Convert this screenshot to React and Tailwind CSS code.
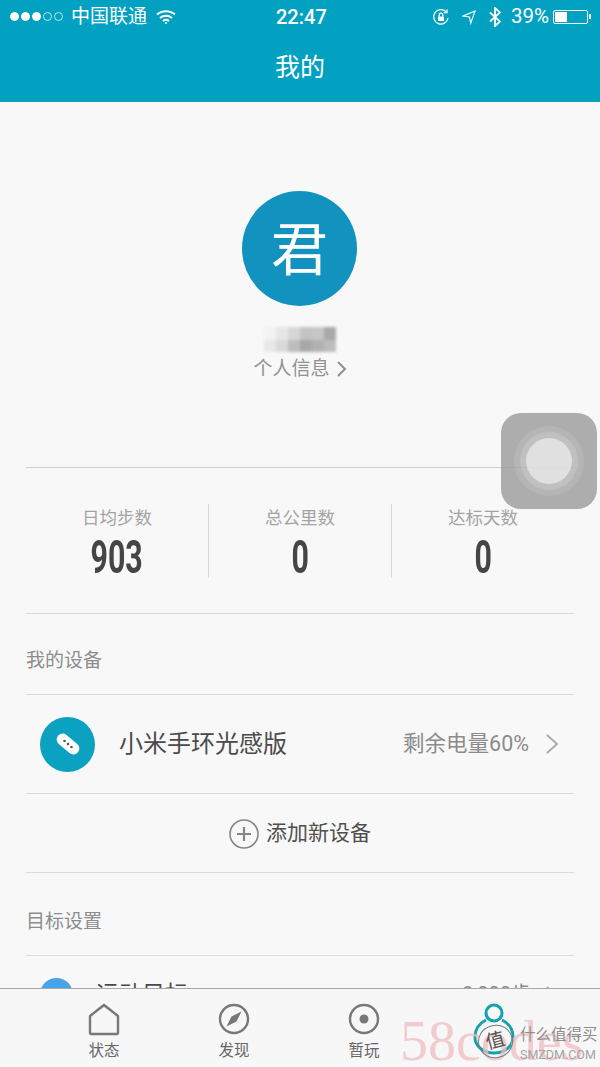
import React from "react";

const CJK = { fontFamily: '"Roboto","Noto Sans CJK SC",sans-serif' };

function Stat({ label, value, border }) {
  return (
    <div className={`flex-1 h-[74px] flex flex-col items-center ${border ? "border-l border-[#d9d9d9]" : ""}`}>
      <div className="text-[17.500px] leading-[26px] text-[#a3a3a3] mt-px">{label}</div>
      <div className="text-[46px] leading-[42px] mt-[5px] font-bold text-[#454545] scale-x-[0.66]">{value}</div>
    </div>
  );
}

function Tab({ label, children }) {
  return (
    <div className="w-[130px] flex flex-col items-center">
      <svg width="36" height="36" viewBox="0 0 36 36" fill="none" stroke="#787878" strokeWidth="2.4">{children}</svg>
      <div className="text-[15.500px] leading-[20px] text-[#666] mt-[3px]">{label}</div>
    </div>
  );
}

const Pixel = ({ c }) => <div className="w-[12px] h-[12.5px]" style={{ background: c }} />;
const pixels = ["#f3f3f3", "#e6e6e6", "#d6d6d6", "#c4c4c4", "#c6c6c6", "#a9a9a9", "#e8e8e8", "#d9d9d9", "#bdbdbd", "#a8a8a8", "#b2b2b2", "#bcbcbc"];

export default function App() {
  return (
    <div className="relative w-[600px] h-[1067px] overflow-hidden flex flex-col bg-[#f8f8f8]" style={CJK}>
      <header className="h-[102px] shrink-0 bg-[#03a1c1] border-b-[3px] border-[#04a3b8] text-white flex flex-col">
        <div className="h-[33px] relative flex items-center pl-[10px] pr-[9px]">
          <div className="flex items-center gap-[2px]">
            {[1, 1, 1, 0, 0].map((f, i) => (
              <span key={i} className={`w-[9px] h-[9px] rounded-full border border-white ${f ? "bg-white" : "opacity-70"}`} />
            ))}
          </div>
          <span className="ml-[8px] text-[19px] leading-none">中国联通</span>
          <svg className="ml-[9px]" width="20" height="16" viewBox="0 0 20 16" fill="none" stroke="white" strokeWidth="2">
            <path d="M1 5.500C6 1 14 1 19 5.500M4 9c3.500-3 8.500-3 12 0M7 12c2-1.500 4-1.500 6 0" />
            <circle cx="10" cy="14" r="1" fill="white" stroke="none" />
          </svg>
          <span className="absolute left-[276px] top-[5px] text-[20px] leading-[24px] font-medium">22:47</span>
          <div className="ml-auto flex items-center">
            <svg width="18" height="18" viewBox="0 0 18 18" fill="none" stroke="white" strokeWidth="1.3">
              <path d="M16 10A7.200 7.200 0 1 1 14 3.800" />
              <path d="M15 1.500v3.200h-3.200" />
              <rect x="6" y="8.500" width="6" height="4.500" fill="white" stroke="none" />
              <path d="M7.200 8.500V7a1.800 1.800 0 0 1 3.600 0v1.500" />
            </svg>
            <svg className="ml-[12px]" width="14" height="16" viewBox="0 0 16 16" fill="none" stroke="white" strokeWidth="1.300">
              <path d="M1 7L15 1 10 15 8.500 8z" />
            </svg>
            <svg className="ml-[13px]" width="12" height="20" viewBox="0 0 12 20" fill="none" stroke="white" strokeWidth="1.800">
              <path d="M1 5.500l10 9-5 4.500V1l5 4.500-10 9" />
            </svg>
            <span className="ml-[10px] text-[20.500px] leading-none">39%</span>
            <div className="ml-[4px] w-[35px] h-[14px] border border-white rounded-[2px] p-px">
              <div className="w-[12px] h-full bg-white" />
            </div>
            <div className="w-[2px] h-[5px] bg-white ml-px" />
          </div>
        </div>
        <div className="flex-1 flex items-center justify-center text-[25px] pt-[4px]">我的</div>
      </header>

      <main className="flex-1 min-h-0 overflow-hidden flex flex-col px-[26px]">
        <section className="h-[366px] shrink-0 flex flex-col items-center border-b border-[#cfcfcf]">
          <div className="mt-[89px] mr-px w-[115px] h-[115px] rounded-full bg-[#1293bf] flex items-center justify-center text-white text-[57px] leading-none pt-[3px]">君</div>
          <div className="mt-[21px] grid grid-cols-6 w-[72px] blur-[1.5px]">
            {pixels.map((c, i) => <Pixel key={i} c={c} />)}
          </div>
          <div className="mt-[3px] flex items-center text-[19px] leading-[28px] text-[#909090]">
            个人信息
            <svg className="ml-[6px]" width="11" height="18" viewBox="0 0 11 18" fill="none" stroke="#909090" strokeWidth="2"><path d="M2 2l7 7-7 7" /></svg>
          </div>
        </section>

        <section className="h-[146px] shrink-0 pt-[36px] flex border-b border-[#dcdcdc]">
          <Stat label="日均步数" value="903" />
          <Stat label="总公里数" value="0" border />
          <Stat label="达标天数" value="0" border />
        </section>

        <div className="h-[81px] shrink-0 flex items-center text-[19px] text-[#8d8d8d] border-b border-[#dcdcdc] pt-[15px]">我的设备</div>

        <div className="h-[99px] shrink-0 flex items-center border-b border-[#dcdcdc]">
          <div className="ml-[14px] w-[55px] h-[55px] rounded-full bg-[#0ba1c0] flex items-center justify-center">
            <svg width="32" height="32" viewBox="0 0 32 32">
              <rect x="3" y="10" width="26" height="12" rx="6" fill="white" transform="rotate(40 16 16)" />
              <circle cx="12.500" cy="13" r="1.300" fill="#555" />
              <circle cx="16" cy="16" r="1.300" fill="#555" />
              <circle cx="19.500" cy="19" r="1.300" fill="#555" />
            </svg>
          </div>
          <span className="ml-[24px] text-[24px] text-[#4a4a4a]">小米手环光感版</span>
          <span className="ml-auto text-[21.500px] text-[#8b8b8b]">剩余电量60%</span>
          <svg className="ml-[16px] mr-[15px]" width="14" height="22" viewBox="0 0 14 22" fill="none" stroke="#a8a8a8" strokeWidth="1.800"><path d="M2 2l10 9-10 9" /></svg>
        </div>

        <div className="h-[79px] shrink-0 flex items-center justify-center border-b border-[#dcdcdc] pt-[1px]">
          <svg width="30" height="32" viewBox="0 0 30 32" fill="none" stroke="#858585">
            <circle cx="15" cy="16" r="14" strokeWidth="1.600" />
            <path d="M15 9v14M8 16h14" strokeWidth="2.200" />
          </svg>
          <span className="ml-[7px] text-[21px] text-[#4f4f4f]">添加新设备</span>
        </div>

        <div className="h-[83px] shrink-0 flex items-center text-[19px] text-[#8d8d8d] border-b border-[#dcdcdc] pt-[17px]">目标设置</div>

        <div className="relative flex-1 flex items-start pt-[22px]">
          <div className="ml-[14px] w-[33px] h-[33px] rounded-full bg-[#48a4e6]" />
          <span className="ml-[23px] text-[23px] leading-[30px] text-[#4a4a4a] mt-[2px]">运动目标</span>
          <span className="ml-auto text-[20px] leading-[30px] text-[#8b8b8b] mt-[1px]">8,000步</span>
          <svg className="ml-[14px] mr-[15px] mt-[7px]" width="14" height="22" viewBox="0 0 14 22" fill="none" stroke="#a8a8a8" strokeWidth="1.800"><path d="M2 2l10 9-10 9" /></svg>
        </div>
      </main>

      <nav className="h-[79px] shrink-0 bg-[#f7f7f7] border-t border-[#a8a8a8] flex pl-[39px] pt-[13px]">
        <Tab label="状态">
          <path d="M4 14L18 3l14 11v16.500a1.500 1.500 0 0 1-1.500 1.500h-25A1.500 1.500 0 0 1 4 30.500z" strokeLinejoin="round" />
        </Tab>
        <Tab label="发现">
          <circle cx="18" cy="17" r="14" />
          <path d="M25.500 9.500L20.500 19.500 10.500 24.500l5-10z" fill="#787878" stroke="none" />
        </Tab>
        <Tab label="暂玩">
          <circle cx="18" cy="17" r="14" />
          <circle cx="18" cy="17" r="4.500" fill="#787878" stroke="none" />
        </Tab>
        <div className="w-[130px] flex justify-center">
          <svg width="42" height="54" viewBox="0 0 42 54" fill="none" stroke="#13a3ad" strokeWidth="3">
            <circle cx="21" cy="11" r="8" />
            <path d="M13 18C5 22 2 28 2 35c0 9 8 16 19 16s19-7 19-16c0-7-3-13-11-17" />
          </svg>
        </div>
      </nav>

      <div className="absolute left-[501px] top-[413px] w-[96px] h-[96px] rounded-[20px] bg-[#9a9a9a]/80 flex items-center justify-center">
        <div className="w-[70px] h-[70px] rounded-full bg-white/10 flex items-center justify-center">
          <div className="w-[58px] h-[58px] rounded-full bg-white/15 flex items-center justify-center">
            <div className="w-[46px] h-[46px] rounded-full bg-white/50" />
          </div>
        </div>
      </div>

      <div className="absolute left-[400px] top-[1006px] text-[56px] leading-[70px] text-[#efbcc0]/75" style={{ fontFamily: '"Liberation Serif",serif' }}>58codes</div>
      <div className="absolute left-[478px] top-[1025px] w-[35px] h-[33px] rounded-full border border-[#6a7f80] flex items-center justify-center text-[19px] text-[#555] rotate-[-15deg]">值</div>
      <div className="absolute left-[520px] top-[1025px] text-[15.500px] leading-[20px] text-[#8f8f8f]">什么值得买</div>
      <div className="absolute left-[520px] top-[1047px] text-[12.500px] leading-[16px] text-[#a3a3a3]">SMZDM.COM</div>
    </div>
  );
}
